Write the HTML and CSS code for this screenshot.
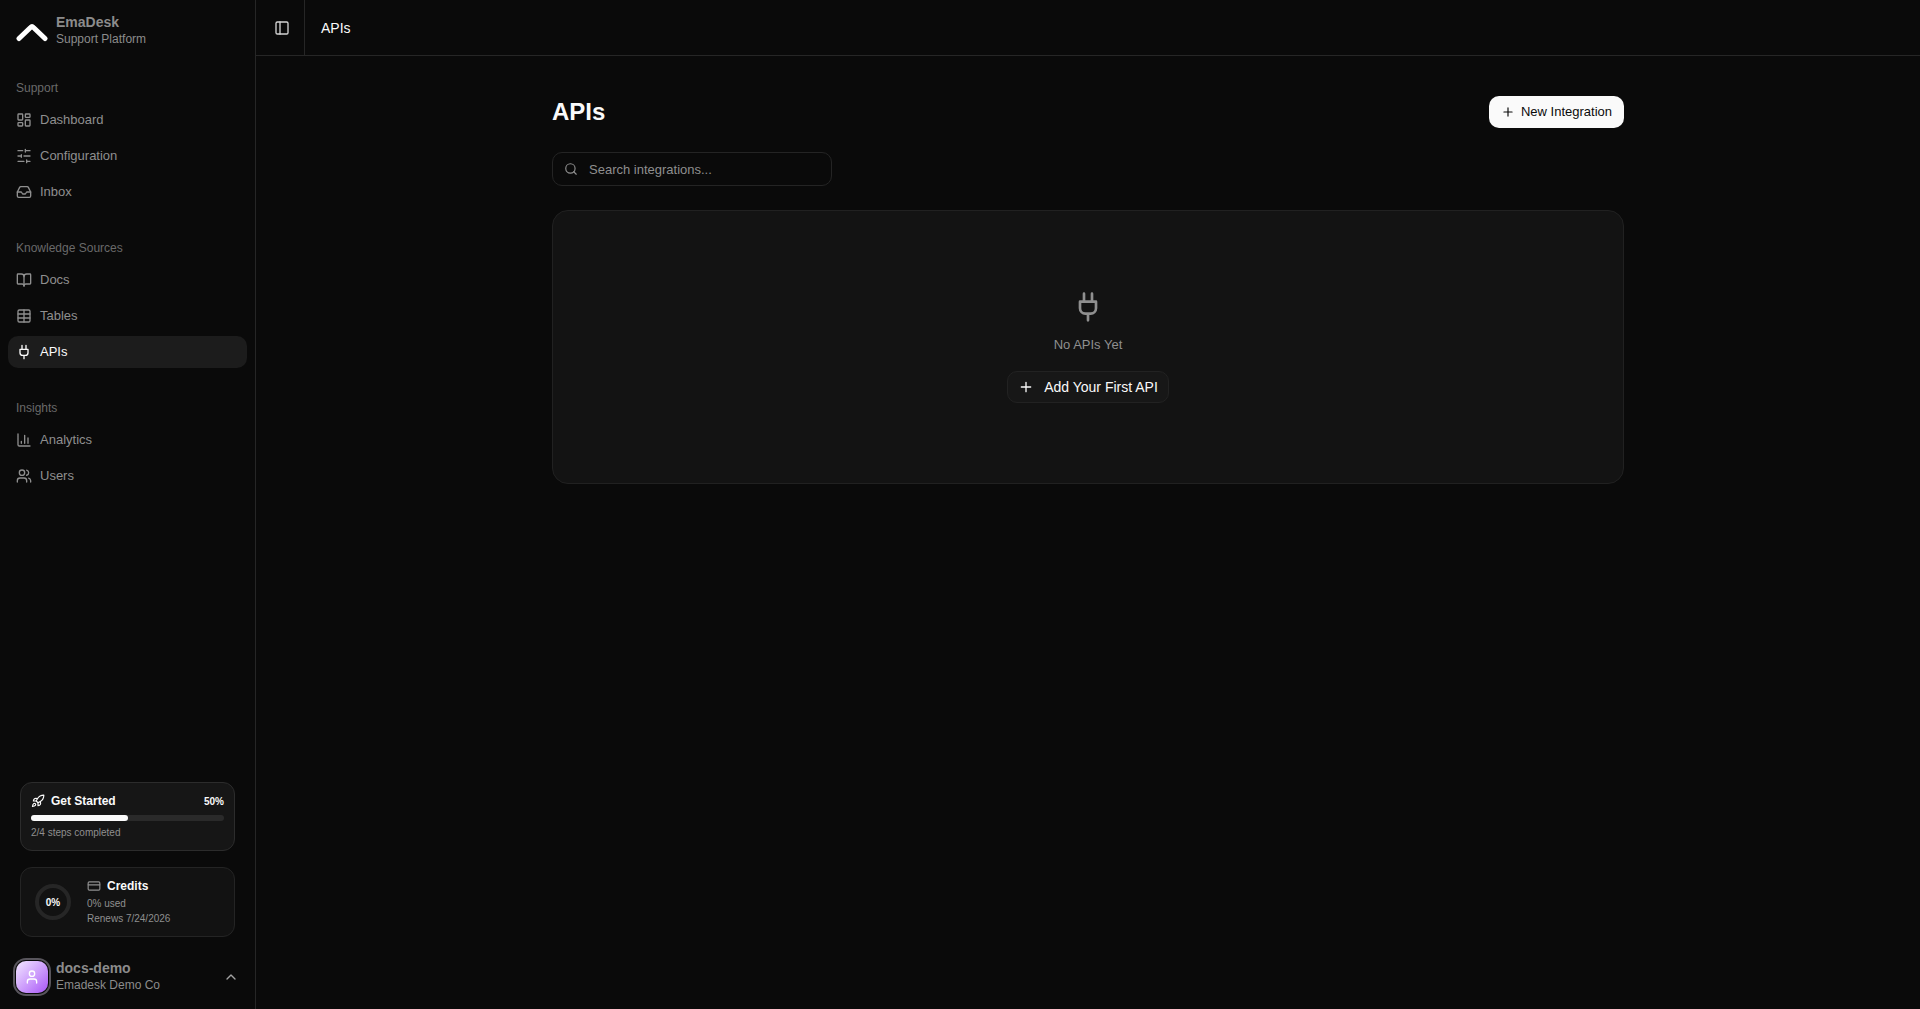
FILE: index.html
```html
<!DOCTYPE html>
<html lang="en">
<head>
<meta charset="utf-8">
<meta name="viewport" content="width=device-width, initial-scale=1">
<title>APIs - EmaDesk</title>
<link rel="stylesheet" href="styles.css">
</head>
<body>
<div class="app">
  <aside class="sidebar">
    <a class="brand" href="#">
      <svg class="brand-logo" viewBox="0 0 32 32" aria-hidden="true"><path d="M3 23.500 L14.500 12.500 Q16 11 17.500 12.500 L29 23.500"/></svg>
      <span class="identity">
        <span class="identity-name">EmaDesk</span>
        <span class="identity-note">Support Platform</span>
      </span>
    </a>

    <nav class="nav">
      <section class="nav-group">
        <h2 class="nav-title">Support</h2>
        <a class="nav-item" href="#"><svg class="icon" viewBox="0 0 24 24" aria-hidden="true"><rect width="7" height="9" x="3" y="3" rx="1"/><rect width="7" height="5" x="14" y="3" rx="1"/><rect width="7" height="9" x="14" y="12" rx="1"/><rect width="7" height="5" x="3" y="16" rx="1"/></svg>Dashboard</a>
        <a class="nav-item" href="#"><svg class="icon" viewBox="0 0 24 24" aria-hidden="true"><path d="M21 4h-7M10 4H3M21 12h-9M8 12H3M21 20h-5M12 20H3M14 2v4M8 10v4M16 18v4"/></svg>Configuration</a>
        <a class="nav-item" href="#"><svg class="icon" viewBox="0 0 24 24" aria-hidden="true"><path d="M22 12h-6l-2 3h-4l-2-3H2"/><path d="M5.450 5.110 2 12v6a2 2 0 0 0 2 2h16a2 2 0 0 0 2-2v-6l-3.450-6.890A2 2 0 0 0 16.760 4H7.240a2 2 0 0 0-1.790 1.110z"/></svg>Inbox</a>
      </section>
      <section class="nav-group">
        <h2 class="nav-title">Knowledge Sources</h2>
        <a class="nav-item" href="#"><svg class="icon" viewBox="0 0 24 24" aria-hidden="true"><path d="M12 7v14"/><path d="M3 18a1 1 0 0 1-1-1V4a1 1 0 0 1 1-1h5a4 4 0 0 1 4 4 4 4 0 0 1 4-4h5a1 1 0 0 1 1 1v13a1 1 0 0 1-1 1h-6a3 3 0 0 0-3 3 3 3 0 0 0-3-3z"/></svg>Docs</a>
        <a class="nav-item" href="#"><svg class="icon" viewBox="0 0 24 24" aria-hidden="true"><path d="M12 3v18"/><rect width="18" height="18" x="3" y="3" rx="2"/><path d="M3 9h18M3 15h18"/></svg>Tables</a>
        <a class="nav-item nav-item-active" href="#" aria-current="page"><svg class="icon" viewBox="0 0 24 24" aria-hidden="true"><path d="M12 22v-5M9 8V2M15 8V2M18 8v5a4 4 0 0 1-4 4h-4a4 4 0 0 1-4-4V8Z"/></svg>APIs</a>
      </section>
      <section class="nav-group">
        <h2 class="nav-title">Insights</h2>
        <a class="nav-item" href="#"><svg class="icon" viewBox="0 0 24 24" aria-hidden="true"><path d="M3 3v16a2 2 0 0 0 2 2h16M18 17V9M13 17V5M8 17v-3"/></svg>Analytics</a>
        <a class="nav-item" href="#"><svg class="icon" viewBox="0 0 24 24" aria-hidden="true"><path d="M16 21v-2a4 4 0 0 0-4-4H6a4 4 0 0 0-4 4v2"/><circle cx="9" cy="7" r="4"/><path d="M22 21v-2a4 4 0 0 0-3-3.870M16 3.130a4 4 0 0 1 0 7.750"/></svg>Users</a>
      </section>
    </nav>

    <div class="status">
      <section class="started">
        <div class="started-head">
          <svg class="icon icon-small" viewBox="0 0 24 24" aria-hidden="true"><path d="M4.500 16.500c-1.500 1.260-2 5-2 5s3.740-.5 5-2c.710-.840.700-2.130-.090-2.910a2.180 2.180 0 0 0-2.910-.090z"/><path d="m12 15-3-3a22 22 0 0 1 2-3.950A12.880 12.880 0 0 1 22 2c0 2.720-.780 7.500-6 11a22.350 22.350 0 0 1-4 2z"/><path d="M9 12H4s.550-3.030 2-4c1.620-1.080 5 0 5 0M12 15v5s3.030-.550 4-2c1.080-1.620 0-5 0-5"/></svg>
          <h3 class="status-title">Get Started</h3>
          <span class="percent">50%</span>
        </div>
        <div class="bar" role="progressbar" aria-label="Get Started" aria-valuenow="50"><div class="bar-fill" style="width: 50%"></div></div>
        <p class="status-note">2/4 steps completed</p>
      </section>
      <section class="credits">
        <div class="ring">0%</div>
        <div>
          <div class="credits-head">
            <svg class="icon icon-small" viewBox="0 0 24 24" aria-hidden="true"><rect width="20" height="14" x="2" y="5" rx="2"/><path d="M2 10h20"/></svg>
            <h3 class="status-title">Credits</h3>
          </div>
          <p class="status-note">0% used</p>
          <p class="status-note">Renews 7/24/2026</p>
        </div>
      </section>
    </div>

    <button class="account" type="button">
      <span class="avatar"><svg class="icon" viewBox="0 0 24 24" aria-hidden="true"><path d="M19 21v-2a4 4 0 0 0-4-4H9a4 4 0 0 0-4 4v2"/><circle cx="12" cy="7" r="4"/></svg></span>
      <span class="identity">
        <span class="identity-name">docs-demo</span>
        <span class="identity-note">Emadesk Demo Co</span>
      </span>
      <svg class="icon account-chevron" viewBox="0 0 24 24" aria-hidden="true"><path d="m18 15-6-6-6 6"/></svg>
    </button>
  </aside>

  <div class="page">
    <header class="topbar">
      <button class="toggle" type="button" aria-label="Toggle sidebar"><svg class="icon" viewBox="0 0 24 24" aria-hidden="true"><rect width="18" height="18" x="3" y="3" rx="2"/><path d="M9 3v18"/></svg></button>
      <span class="crumb">APIs</span>
    </header>
    <main class="content">
      <div class="heading">
        <h1 class="title">APIs</h1>
        <button class="button-primary" type="button"><svg class="icon icon-small" viewBox="0 0 24 24" aria-hidden="true"><path d="M5 12h14M12 5v14"/></svg>New Integration</button>
      </div>
      <label class="search">
        <svg class="icon icon-small" viewBox="0 0 24 24" aria-hidden="true"><circle cx="11" cy="11" r="8"/><path d="m21 21-4.300-4.300"/></svg>
        <input class="search-input" type="text" placeholder="Search integrations..." aria-label="Search integrations">
      </label>
      <section class="empty">
        <svg class="icon icon-large" viewBox="0 0 24 24" aria-hidden="true"><path d="M12 22v-5M9 8V2M15 8V2M18 8v5a4 4 0 0 1-4 4h-4a4 4 0 0 1-4-4V8Z"/></svg>
        <p class="empty-text">No APIs Yet</p>
        <button class="button-outline" type="button"><svg class="icon" viewBox="0 0 24 24" aria-hidden="true"><path d="M5 12h14M12 5v14"/></svg>Add Your First API</button>
      </section>
    </main>
  </div>
</div>
</body>
</html>
```
FILE: styles.css
```css
* {
  box-sizing: border-box;
}

body {
  margin: 0;
  background: #0a0a0a;
  color: #fafafa;
  font-family: "Liberation Sans", Arial, sans-serif;
  font-size: 13px;
}

h1, h2, h3, p {
  margin: 0;
}

a {
  color: inherit;
  text-decoration: none;
}

button {
  font: inherit;
  color: inherit;
  border: 0;
  background: none;
  cursor: pointer;
}

.app {
  display: flex;
  min-height: 100vh;
}

.icon {
  width: 16px;
  height: 16px;
  flex: none;
  fill: none;
  stroke: currentColor;
  stroke-width: 2;
  stroke-linecap: round;
  stroke-linejoin: round;
}

.icon-small {
  width: 14px;
  height: 14px;
}

.icon-large {
  width: 32px;
  height: 32px;
}

/* Sidebar */

.sidebar {
  width: 256px;
  flex: none;
  display: flex;
  flex-direction: column;
  border-right: 1px solid #262626;
}

.brand {
  display: flex;
  align-items: center;
  gap: 8px;
  height: 64px;
  padding: 0 16px 2px;
}

.brand-logo {
  width: 32px;
  height: 32px;
  fill: none;
  stroke: #fff;
  stroke-width: 5;
  stroke-linecap: round;
}

.identity {
  display: flex;
  flex-direction: column;
  color: #8c8c8c;
  text-align: left;
}

.identity-name {
  font-size: 14px;
  font-weight: 700;
  line-height: 17px;
}

.identity-note {
  font-size: 12px;
  line-height: 17px;
}

.nav {
  display: flex;
  flex-direction: column;
  gap: 24px;
  padding: 8px;
}

.nav-group {
  display: flex;
  flex-direction: column;
  gap: 4px;
}

.nav-title {
  padding: 0 8px;
  margin-bottom: -4px;
  color: #696969;
  font-size: 12px;
  font-weight: 400;
  line-height: 32px;
}

.nav-item {
  display: flex;
  align-items: center;
  gap: 8px;
  height: 32px;
  padding: 0 8px;
  border-radius: 10px;
  color: #8f8f8f;
  line-height: 20px;
}

.nav-item-active {
  background: #1c1c1c;
  color: #fafafa;
}

.status {
  display: flex;
  flex-direction: column;
  gap: 16px;
  margin-top: auto;
  padding: 0 20px;
}

.started,
.credits {
  border: 1px solid #242424;
  border-radius: 12px;
  background: #121212;
}

.started {
  padding: 10px;
  border-color: #2c2c2c;
  background: #161616;
}

.started-head,
.credits-head {
  display: flex;
  align-items: center;
  gap: 6px;
}

.started-head {
  margin-bottom: 6px;
}

.status-title {
  font-size: 12px;
  line-height: 16px;
}

.percent {
  margin-left: auto;
  font-size: 10px;
  font-weight: 700;
}

.bar {
  height: 6px;
  margin-bottom: 4px;
  border-radius: 3px;
  background: #2a2a2a;
}

.bar-fill {
  height: 6px;
  border-radius: 3px;
  background: #fafafa;
}

.status-note {
  color: #8f8f8f;
  font-size: 10px;
  line-height: 15px;
}

.credits {
  display: flex;
  align-items: center;
  gap: 16px;
  padding: 10px 14px;
}

.credits-head {
  margin-bottom: 2px;
  color: #8f8f8f;
}

.credits-head .status-title {
  color: #fafafa;
}

.ring {
  display: grid;
  place-items: center;
  width: 36px;
  height: 36px;
  border: 4px solid #262626;
  border-radius: 50%;
  font-size: 10px;
  font-weight: 700;
}

.account {
  display: flex;
  align-items: center;
  gap: 8px;
  height: 64px;
  margin-top: 8px;
  padding: 0 16px;
}

.avatar {
  display: grid;
  place-items: center;
  width: 32px;
  height: 32px;
  border-radius: 10px;
  background: linear-gradient(135deg, #f3e8ff, #c792fb 60%, #a855f7);
  box-shadow: 0 0 0 1px #0a0a0a, 0 0 0 3px #58555c;
  color: #fff;
}

.account-chevron {
  margin-left: auto;
  color: #a3a3a3;
}

/* Page */

.page {
  flex: 1;
  min-width: 0;
}

.topbar {
  display: flex;
  height: 56px;
  border-bottom: 1px solid #262626;
}

.toggle {
  display: grid;
  place-items: center;
  width: 49px;
  padding: 0 0 0 4px;
  border-right: 1px solid #262626;
  color: #d4d4d4;
}

.crumb {
  align-self: center;
  padding: 0 16px;
  font-size: 14px;
}

.content {
  max-width: 1120px;
  margin: 0 auto;
  padding: 40px 24px;
}

.heading {
  display: flex;
  align-items: center;
  justify-content: space-between;
  margin-bottom: 24px;
}

.title {
  font-size: 24px;
  line-height: 32px;
}

.button-primary,
.button-outline {
  display: flex;
  align-items: center;
  height: 32px;
  border-radius: 10px;
  line-height: 20px;
}

.button-primary {
  gap: 6px;
  padding: 0 12px;
  background: #fafafa;
  color: #0a0a0a;
}

.search {
  display: flex;
  align-items: center;
  gap: 11px;
  width: 280px;
  height: 34px;
  margin-bottom: 24px;
  padding: 0 11px;
  border: 1px solid #242424;
  border-radius: 10px;
  color: #8f8f8f;
}

.search-input {
  flex: 1;
  min-width: 0;
  padding: 0;
  border: 0;
  outline: 0;
  background: none;
  color: #fafafa;
  font: inherit;
}

.search-input::placeholder {
  color: #8f8f8f;
}

.empty {
  display: flex;
  flex-direction: column;
  align-items: center;
  padding: 80px 24px;
  border: 1px solid #212121;
  border-radius: 16px;
  background: #131313;
  color: #8f8f8f;
}

.empty-text {
  margin: 12px 0 16px;
  line-height: 20px;
}

.button-outline {
  gap: 10px;
  padding: 0 10px;
  border: 1px solid #222;
  background: #171717;
  color: #fafafa;
  font-size: 14px;
}
```
